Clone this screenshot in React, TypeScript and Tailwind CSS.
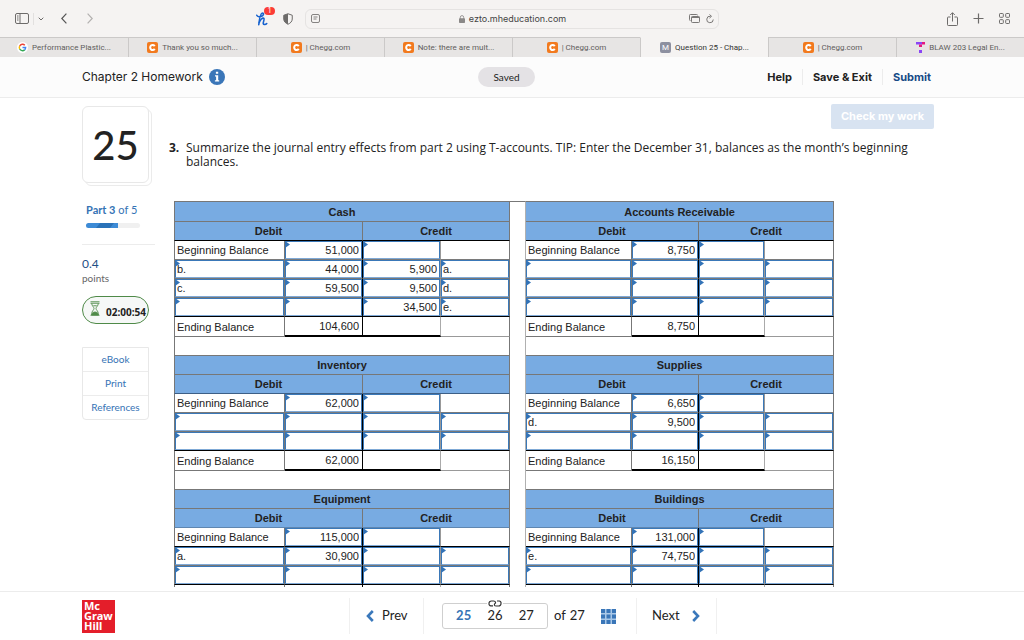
import React from "react";

type Account = {
  name: string;
  beginning: string;
  ending: string;
  lines: [string, string, string, string][];
};

type Block = {
  left: Account;
  right: Account;
  headLine: string;
  beginLine: string;
};

const empty: [string, string, string, string] = ["", "", "", ""];

const blocks: Block[] = [
  {
    left: {
      name: "Cash",
      beginning: "51,000",
      ending: "104,600",
      lines: [
        ["b.", "44,000", "5,900", "a."],
        ["c.", "59,500", "9,500", "d."],
        ["", "", "34,500", "e."],
      ],
    },
    right: { name: "Accounts Receivable", beginning: "8,750", ending: "8,750", lines: [empty, empty, empty] },
    headLine: "border-b-black",
    beginLine: "border-b-[#7a7a7a]",
  },
  {
    left: { name: "Inventory", beginning: "62,000", ending: "62,000", lines: [empty, empty] },
    right: { name: "Supplies", beginning: "6,650", ending: "16,150", lines: [["d.", "9,500", "", ""], empty] },
    headLine: "border-b-[#3d5f86]",
    beginLine: "border-b-[#7a7a7a]",
  },
  {
    left: { name: "Equipment", beginning: "115,000", ending: "", lines: [["a.", "30,900", "", ""], empty] },
    right: { name: "Buildings", beginning: "131,000", ending: "", lines: [["e.", "74,750", "", ""], empty] },
    headLine: "border-b-[#5f86b0]",
    beginLine: "border-b-black",
  },
];

function Entry({ value, label, align }: { value: string; label: string; align: "left" | "right" }) {
  return (
    <div className="relative">
      <input
        type="text"
        aria-label={label}
        defaultValue={value}
        className={
          "block h-[18px] w-full border border-[#3a78b8] border-b-[#7fa9d6] bg-transparent pb-px pl-px pr-[2px] text-[11px] leading-4 text-[#222] outline-none " +
          (align === "right" ? "text-right" : "text-left")
        }
      />
      <svg className="pointer-events-none absolute left-0 top-0 h-[7px] w-[5px]" viewBox="0 0 5 7" aria-hidden="true">
        <path d="M0 0 L5 3.5 L0 7 Z" fill="#3373b7" />
      </svg>
    </div>
  );
}

function Gap({ top = false }: { top?: boolean }) {
  return <td className={"border-r border-r-[#b0b0b0] p-0 " + (top ? "border-t border-t-[#777]" : "")} />;
}

function TitleCell({ name, first, edge }: { name: string; first: boolean; edge: boolean }) {
  return (
    <th
      colSpan={4}
      scope="colgroup"
      className={
        "border-b border-r border-[#777] bg-[#78abe2] p-0 font-bold " + (first ? "border-t " : "") + (edge ? "border-l" : "")
      }
    >
      {name}
    </th>
  );
}

function HeadCells({ line, edge }: { line: string; edge: boolean }) {
  const base = "border-b border-r border-r-[#777] bg-[#78abe2] p-0 font-bold " + line;
  return (
    <>
      <th colSpan={2} scope="colgroup" className={base + (edge ? " border-l border-l-[#777]" : "")}>
        Debit
      </th>
      <th colSpan={2} scope="colgroup" className={base}>
        Credit
      </th>
    </>
  );
}

function BeginCells({ account, line, edge }: { account: Account; line: string; edge: boolean }) {
  return (
    <>
      <td className={"border-b border-r border-r-[#777] py-0 pl-[2px] pr-0 " + line + (edge ? " border-l border-l-[#777]" : "")}>
        Beginning Balance
      </td>
      <td className={"border-b border-r border-r-black p-0 " + line}>
        <Entry value={account.beginning} label={account.name + " beginning debit"} align="right" />
      </td>
      <td className={"border-b border-r border-r-[#999] p-0 " + line}>
        <Entry value="" label={account.name + " beginning credit"} align="right" />
      </td>
      <td className={"border-b border-r border-r-[#777] p-0 " + line} />
    </>
  );
}

function LineCells({
  account,
  index,
  last,
  edge,
}: {
  account: Account;
  index: number;
  last: boolean;
  edge: boolean;
}) {
  const [debitRef, debit, credit, creditRef] = account.lines[index];
  const line = last ? "border-b border-b-black " : "border-b border-b-[#777] ";
  const name = account.name + " line " + (index + 1);
  return (
    <>
      <td className={line + "border-r border-r-[#777] p-0 " + (edge ? "border-l border-l-[#777]" : "")}>
        <Entry value={debitRef} label={name + " debit reference"} align="left" />
      </td>
      <td className={line + "border-r border-r-black p-0"}>
        <Entry value={debit} label={name + " debit"} align="right" />
      </td>
      <td className={line + "border-r border-r-[#999] p-0"}>
        <Entry value={credit} label={name + " credit"} align="right" />
      </td>
      <td className={line + "border-r border-r-[#777] p-0"}>
        <Entry value={creditRef} label={name + " credit reference"} align="left" />
      </td>
    </>
  );
}

function EndingCells({ account, edge }: { account: Account; edge: boolean }) {
  return (
    <>
      <td className={"border-b border-r border-[#777] py-0 pl-[2px] pr-0 " + (edge ? "border-l" : "")}>
        {account.ending ? "Ending Balance" : ""}
      </td>
      <td className="border-b-2 border-r border-black py-0 pl-0 pr-[3px] text-right">{account.ending}</td>
      <td className="border-b-2 border-r border-b-black border-r-[#aaa] p-0" />
      <td className="border-b border-r border-b-[#999] border-r-[#777] p-0" />
    </>
  );
}

function Accounts() {
  return (
    <table className="w-full max-w-[660px] table-fixed border-separate border-spacing-0 font-['Liberation_Sans',Arial,sans-serif] text-[11px] leading-4 text-[#222]">
      <colgroup>
        <col className="w-[111px]" />
        <col className="w-[78px]" />
        <col className="w-[78px]" />
        <col className="w-[69px]" />
        <col className="w-[16px]" />
        <col className="w-[106px]" />
        <col className="w-[67px]" />
        <col className="w-[66px]" />
        <col className="w-[69px]" />
      </colgroup>
      {blocks.map((b, i) => (
        <tbody key={b.left.name}>
          <tr className={i === 0 ? "h-[21px]" : "h-[19px]"}>
            <TitleCell name={b.left.name} first={i === 0} edge />
            <Gap top={i === 0} />
            <TitleCell name={b.right.name} first={i === 0} edge={false} />
          </tr>
          <tr className="h-[19px]">
            <HeadCells line={b.headLine} edge />
            <Gap />
            <HeadCells line={b.headLine} edge={false} />
          </tr>
          <tr className="h-[19px]">
            <BeginCells account={b.left} line={b.beginLine} edge />
            <Gap />
            <BeginCells account={b.right} line={b.beginLine} edge={false} />
          </tr>
          {b.left.lines.map((_, n) => (
            <tr key={n} className="h-[19px]">
              <LineCells account={b.left} index={n} last={n === b.left.lines.length - 1} edge />
              <Gap />
              <LineCells account={b.right} index={n} last={n === b.left.lines.length - 1} edge={false} />
            </tr>
          ))}
          <tr className="h-5">
            <EndingCells account={b.left} edge />
            <Gap />
            <EndingCells account={b.right} edge={false} />
          </tr>
          <tr className="h-[19px]">
            <td colSpan={4} className="border-x border-b border-[#777] p-0" />
            <Gap />
            <td colSpan={4} className="border-b border-r border-[#777] p-0" />
          </tr>
        </tbody>
      ))}
    </table>
  );
}

function Favicon({ kind }: { kind: string }) {
  if (kind === "google")
    return (
      <svg className="size-[11px] shrink-0" viewBox="0 0 22 22" aria-hidden="true">
        <circle cx="11" cy="11" r="11" fill="#fff" />
        <g fill="none" strokeWidth="3">
          <path d="M15.6 6.6A6.4 6.4 0 0 0 5.4 8" stroke="#ea4335" />
          <path d="M5.4 8a6.4 6.4 0 0 0 0 6" stroke="#fbbc05" />
          <path d="M5.4 14a6.4 6.4 0 0 0 9.8 1.8" stroke="#34a853" />
          <path d="M11 11.2h6.2a6.4 6.4 0 0 1-2 4.6" stroke="#4285f4" />
        </g>
      </svg>
    );
  if (kind === "chegg")
    return (
      <svg className="size-[11px] shrink-0" viewBox="0 0 22 22" aria-hidden="true">
        <rect width="22" height="22" rx="4" fill="#f27a1e" />
        <path d="M15.5 8.2A5 5 0 1 0 15.5 13.8" fill="none" stroke="#fff" strokeWidth="4" />
      </svg>
    );
  if (kind === "m")
    return (
      <span className="flex size-[11px] shrink-0 items-center justify-center rounded-[2px] bg-[#8d90a0] text-[8px] leading-none text-white">
        M
      </span>
    );
  return (
    <svg className="h-[11px] w-[9px] shrink-0" viewBox="0 0 18 22" aria-hidden="true">
      <path d="M0 0h12v5H0z" fill="#8b45f5" />
      <path d="M12 0h6v5h-6zM6 5h6v5H6z" fill="#e5187d" />
      <path d="M6 16h6v6H6z" fill="#8b45f5" />
    </svg>
  );
}

const tabs = [
  { kind: "google", text: "Performance Plastic..." },
  { kind: "chegg", text: "Thank you so much..." },
  { kind: "chegg", text: "| Chegg.com" },
  { kind: "chegg", text: "Note: there are mult..." },
  { kind: "chegg", text: "| Chegg.com" },
  { kind: "m", text: "Question 25 - Chap...", active: true },
  { kind: "chegg", text: "| Chegg.com" },
  { kind: "t", text: "BLAW 203 Legal En..." },
];

function BrowserBar() {
  return (
    <div className="shrink-0 bg-[#f5f3f2] font-[Inter,sans-serif]">
      <div className="flex h-[37px] items-center">
        <div className="flex w-[305px] shrink-0 items-center pl-[15px] pr-3 text-[#6d6b6a]">
          <button type="button" aria-label="Show sidebar">
            <svg className="h-[11px] w-[14px]" viewBox="0 0 14 11" fill="none" stroke="currentColor" aria-hidden="true">
              <rect x="0.5" y="0.5" width="13" height="10" rx="1.5" />
              <path d="M5 0.5v10M2 3h1.5M2 5h1.5M2 7h1.5" />
            </svg>
          </button>
          <span className="ml-1 mr-1 h-3 w-px bg-[#e2e0df]" />
          <button type="button" aria-label="Tab groups">
            <svg className="h-1 w-1.5" viewBox="0 0 6 4" fill="none" stroke="currentColor" aria-hidden="true">
              <path d="M0.7 0.7 3 3 5.3 0.7" />
            </svg>
          </button>
          <button type="button" aria-label="Back" className="ml-[17px]">
            <svg className="h-[11px] w-1.5" viewBox="0 0 6 11" fill="none" stroke="#555" strokeWidth="1.2" aria-hidden="true">
              <path d="M5.4 0.6 0.8 5.5l4.6 4.9" />
            </svg>
          </button>
          <button type="button" aria-label="Forward" className="ml-5">
            <svg className="h-[11px] w-1.5" viewBox="0 0 6 11" fill="none" stroke="#b3b1b0" strokeWidth="1.2" aria-hidden="true">
              <path d="M0.6 0.6 5.2 5.5 0.6 10.4" />
            </svg>
          </button>
          <button type="button" aria-label="Honey" className="relative ml-auto">
            <svg className="h-[14px] w-3" viewBox="0 0 24 28" fill="none" stroke="#1762cf" strokeWidth="3.2" strokeLinecap="round" strokeLinejoin="round" aria-hidden="true">
              <path d="M1.5 6.5C3 10 8 10.500 13 7.500c3-2 2.500-5.500 0-5.500-4 0-6 10-7.500 23.500" />
              <path d="M6.500 21c2-6 6.500-10 9-8.500s-1.500 7-1 10.500c.5 3 5 2.500 7 0" />
            </svg>
            <span className="absolute -right-[7px] -top-[5px] flex h-2 w-[11px] items-center justify-center rounded-full bg-[#fb3b36] text-[7px] leading-none text-white">
              1
            </span>
          </button>
          <button type="button" aria-label="Privacy report" className="ml-[15px]">
            <svg className="h-3 w-[10px]" viewBox="0 0 20 24" aria-hidden="true">
              <path d="M10 1.500 18.500 4.500V12c0 5-4 8.500-8.500 10.500C5.500 20.500 1.500 17 1.500 12V4.500Z" fill="none" stroke="#6d6b6a" strokeWidth="2" />
              <path d="M10 1.500v21C5.500 20.500 1.500 17 1.500 12V4.500Z" fill="#6d6b6a" />
            </svg>
          </button>
        </div>
        <div className="flex h-[20px] min-w-0 flex-1 items-center rounded-md border border-[#e5e3e2] px-1">
          <svg className="ml-px size-[9px] text-[#858382]" viewBox="0 0 9 9" fill="none" stroke="currentColor" aria-hidden="true">
            <rect x="0.500" y="0.500" width="8" height="8" rx="1.500" />
            <path d="M2.500 3h4M2.500 5h3" />
          </svg>
          <div className="flex flex-1 items-center justify-center gap-1 pl-4 text-[9px] text-[#444]">
            <svg className="h-2 w-[6px]" viewBox="0 0 6 8" aria-hidden="true">
              <path d="M1.300 4V2.300a1.700 1.700 0 0 1 3.400 0V4" fill="none" stroke="#9a9897" />
              <rect y="3.200" width="6" height="4.800" rx="0.800" fill="#8a8887" />
            </svg>
            ezto.mheducation.com
          </div>
          <svg className="h-[9px] w-[11px] text-[#7a7877]" viewBox="0 0 11 9" fill="none" stroke="currentColor" aria-hidden="true">
            <path d="M1.500 6.500H1.300A.8.8 0 0 1 .5 5.700V1.300A.8.8 0 0 1 1.300.5h6.400a.8.800 0 0 1 .8.800" />
            <rect x="2.500" y="2.500" width="8" height="6" rx="0.800" />
            <path d="M2.500 3.500h8" />
          </svg>
          <button type="button" aria-label="Reload" className="ml-[6px]">
            <svg className="h-[10px] w-2" viewBox="0 0 16 20" fill="none" stroke="#6d6b6a" strokeWidth="1.800" aria-hidden="true">
              <path d="M9 4.500A6.500 6.500 0 1 0 14.500 11" />
              <path d="M7 1l4 3.600L7 8.200" />
            </svg>
          </button>
        </div>
        <div className="flex w-[305px] shrink-0 items-center justify-end pr-[14px] text-[#6d6b6a]">
          <button type="button" aria-label="Share">
            <svg className="h-[14px] w-[11px]" viewBox="0 0 11 14" fill="none" stroke="currentColor" aria-hidden="true">
              <path d="M3.500 5H1.300a.8.800 0 0 0-.8.800v6.900a.8.800 0 0 0 .8.800h8.400a.8.800 0 0 0 .8-.8V5.800a.8.800 0 0 0-.8-.8H7.500M5.500 9.500V.8M3.200 3l2.300-2.300L7.800 3" />
            </svg>
          </button>
          <button type="button" aria-label="New tab" className="ml-[15px]">
            <svg className="size-[11px]" viewBox="0 0 11 11" stroke="currentColor" strokeWidth="1.200" aria-hidden="true">
              <path d="M5.500.5v10M.5 5.500h10" />
            </svg>
          </button>
          <button type="button" aria-label="Tab overview" className="ml-[15px]">
            <svg className="size-[11px]" viewBox="0 0 11 11" fill="none" stroke="currentColor" aria-hidden="true">
              <rect x="0.500" y="0.500" width="3.800" height="3.800" rx="0.700" />
              <rect x="6.700" y="0.500" width="3.800" height="3.800" rx="0.700" />
              <rect x="0.500" y="6.700" width="3.800" height="3.800" rx="0.700" />
              <rect x="6.700" y="6.700" width="3.800" height="3.800" rx="0.700" />
            </svg>
          </button>
        </div>
      </div>
      <div className="grid h-5 grid-cols-8 font-[Roboto,sans-serif]">
        {tabs.map((t, i) => (
          <button
            key={i}
            type="button"
            className={
              "flex min-w-0 items-center justify-center gap-1 whitespace-nowrap border-l border-t border-l-[#cbc9c8] text-[8px] first:border-l-0 " +
              (t.active ? "border-t-[#f5f3f2] text-[#333]" : "border-t-[#cbc9c8] bg-[#e7e5e4] text-[#5f5d5c]")
            }
          >
            <Favicon kind={t.kind} />
            {t.text}
          </button>
        ))}
      </div>
    </div>
  );
}

function Sidebar() {
  return (
    <aside className="w-[73px] shrink-0 pt-2">
      <div className="relative h-20 w-[70px]">
        <div className="absolute bottom-0 right-0 h-[77px] w-[67px] rounded-md border border-[#ebebeb] bg-white" />
        <div className="absolute left-0 top-0 flex h-[77px] w-[67px] items-center justify-center rounded-md border border-[#e8e8e8] bg-white text-[40px] font-medium leading-none text-[#222]">
          25
        </div>
      </div>
      <p className="ml-1 mt-[17px] text-[11px] leading-[14px] text-[#3573b5]">
        <b>Part 3</b> of 5
      </p>
      <div className="ml-1 mt-[6px] h-[5px] w-[54px] overflow-hidden rounded-full bg-[#f0f0f0]">
        <svg className="h-[5px] w-8" viewBox="0 0 32 5" aria-hidden="true">
          <path d="M0 0h32v5H0z" fill="#3d8bd6" />
          <path d="M14 0h14l-4 5H10z" fill="#2a72b8" />
        </svg>
      </div>
      <hr className="mt-4 border-[#ececec]" />
      <p className="mt-3 text-[12px] leading-[14px] text-[#1f4f86]">0.4</p>
      <p className="text-[10px] leading-[14px] text-[#666]">points</p>
      <div className="mt-[11px] flex h-7 w-[67px] items-center rounded-full border border-[#4f8a48] bg-[#f6f8f7] pl-[7px] text-[#4f8a48]">
        <svg className="mb-[3px] h-[15px] w-[10px] shrink-0" viewBox="0 0 20 30" fill="none" stroke="currentColor" strokeWidth="1.800" aria-hidden="true">
          <path d="M1 1.500h18M1 28.500h18M1 4.500h18M3.500 5c0 5 4.500 7 4.500 10s-4.500 5-4.500 10M16.500 5c0 5-4.500 7-4.500 10s4.500 5 4.500 10" />
          <path d="M3 28c0-4 4-6 7-6s7 2 7 6Z" fill="currentColor" />
          <path d="M6.500 9.500h7" />
        </svg>
        <span className="ml-[6px] mt-1 font-['Open_Sans',sans-serif] text-[10px] font-bold leading-none text-[#222]">02:00:54</span>
      </div>
      <nav className="mt-[23px] w-[67px] divide-y divide-[#ececec] rounded-b border border-[#e8e8e8] text-center text-[10px] leading-[23px] text-[#3573b5]">
        <a href="#ebook" className="block">eBook</a>
        <a href="#print" className="block">Print</a>
        <a href="#references" className="block">References</a>
      </nav>
    </aside>
  );
}

function Chevron({ d }: { d: string }) {
  return (
    <svg className="h-3 w-2" viewBox="0 0 8 12" fill="none" stroke="#3a78bb" strokeWidth="2.600" aria-hidden="true">
      <path d={d} />
    </svg>
  );
}

function Footer() {
  return (
    <footer className="mt-1 grid h-[49px] shrink-0 grid-cols-[1fr_auto_1fr] items-center border-t border-[#ececec] bg-white pl-[82px] pr-10 text-[13px] text-[#222]">
      <p className="flex h-[33px] w-[33px] items-center bg-[#e41e2a] pl-[2px] font-['Noto_Sans',sans-serif] text-[11px] font-bold leading-[10px] text-white">
        Mc Graw Hill
      </p>
      <nav className="flex h-9 items-center">
        <button type="button" className="flex h-full w-[74px] items-center gap-2 border-l border-[#f0f0f0] pl-4">
          <Chevron d="M6.800 1 2 6l4.800 5" />
          Prev
        </button>
        <div className="flex h-full w-[213px] items-center border-l border-[#f0f0f0] pl-[18px]">
          <div className="relative flex h-[26px] w-[106px] items-center justify-around rounded-[3px] border border-[#cfcfcf] px-[5px]">
            <button type="button" aria-current="page" className="font-bold text-[#3573b5]">25</button>
            <button type="button">26</button>
            <button type="button">27</button>
            <svg className="absolute -top-[4px] left-[44px] h-[7px] w-4 bg-white" viewBox="0 0 16 7" fill="none" stroke="#333" strokeWidth="1.200" aria-hidden="true">
              <path d="M6 5.800H3.800A2 2 0 0 1 2 3.500 2.400 2.400 0 0 1 4.400 1h2.200C9 1 8.800 3 8 3.600S6.800 6 9.400 6h2.200A2.400 2.400 0 0 0 14 3.500 2 2 0 0 0 12.200 1H10" />
            </svg>
          </div>
          <span className="ml-[6px]">of</span>
          <span className="ml-1">27</span>
          <button type="button" aria-label="Question list" className="ml-4">
            <svg className="size-[15px]" viewBox="0 0 15 15" aria-hidden="true">
              <path d="M0 0h15v15H0z" fill="#a9c8e8" />
              <path d="M0 0h4v4H0zM5.500 0h4v4h-4zM11 0h4v4h-4zM0 5.500h4v4H0zM5.500 5.500h4v4h-4zM11 5.500h4v4h-4zM0 11h4v4H0zM5.500 11h4v4h-4zM11 11h4v4h-4z" fill="#3a76b8" />
            </svg>
          </button>
        </div>
        <button type="button" className="flex h-full w-[81px] items-center justify-between border-x border-[#f0f0f0] pl-[15px] pr-4">
          Next
          <Chevron d="M1.200 1 6 6l-4.800 5" />
        </button>
      </nav>
    </footer>
  );
}

export default function App() {
  return (
    <div className="flex h-screen flex-col overflow-hidden bg-white font-[Lato,sans-serif]">
      <BrowserBar />
      <header className="grid h-[41px] shrink-0 grid-cols-[1fr_auto_1fr] items-center border-b border-[#ececec] bg-[#fcfcfc] pl-[82px] pr-[93px]">
        <div className="flex items-center gap-[6px]">
          <h1 className="font-[Inter,sans-serif] text-[12px] text-[#222]">Chapter 2 Homework</h1>
          <svg className="size-4" viewBox="0 0 16 16" aria-hidden="true">
            <circle cx="8" cy="8" r="8" fill="#3a76b8" />
            <path d="M6.900 2.800h2.300v2H6.900zM6 6.300h3.200v4.900h1v1.300H5.900v-1.300h1.200V7.600H6z" fill="#fff" />
          </svg>
        </div>
        <span className="flex h-5 w-[57px] items-center justify-center rounded-full bg-[#e4e2e5] text-[10px] text-[#222]">Saved</span>
        <div className="flex items-center justify-end gap-[10px] font-[Inter,sans-serif] text-[11px] font-bold text-[#222]">
          <button type="button">Help</button>
          <span className="h-4 w-px bg-[#ececec]" />
          <button type="button">Save &amp; Exit</button>
          <span className="h-4 w-px bg-[#ececec]" />
          <button type="button" className="text-[#164a86]">Submit</button>
        </div>
      </header>
      <main className="flex min-h-0 flex-1 gap-[14px] overflow-hidden pl-[82px] pr-[90px]">
        <Sidebar />
        <section className="min-w-0 flex-1 pt-[6px]">
          <div className="flex justify-end">
            <button type="button" disabled className="h-[25px] w-[103px] rounded-[2px] bg-[#d8e3f1] font-[Inter,sans-serif] text-[11px] font-bold text-white">
              Check my work
            </button>
          </div>
          <div className="mt-3 flex font-['Open_Sans',sans-serif] text-[12px] leading-[14px] text-[#222]">
            <b className="w-[17px] shrink-0">3.</b>
            <p>
              Summarize the journal entry effects from part 2 using T-accounts. TIP: Enter the December 31, balances as the
              month’s beginning balances.
            </p>
          </div>
          <div className="mt-8 pl-[5px]">
            <Accounts />
          </div>
        </section>
      </main>
      <Footer />
    </div>
  );
}
